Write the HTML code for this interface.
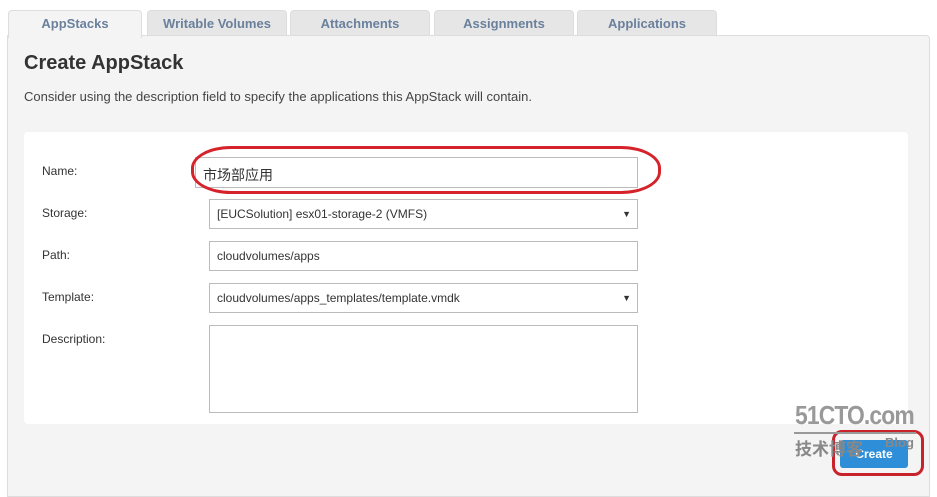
<!DOCTYPE html>
<html><head><meta charset="utf-8"><style>
body{margin:0;width:937px;height:475px;background:#fff;font-family:"Liberation Sans","Noto Sans CJK SC",sans-serif;position:relative;overflow:hidden}
.tab{position:absolute;top:10px;height:26px;background:#e6e6e6;border:1px solid #ddd;border-bottom:none;border-radius:4px 4px 0 0;color:#6a809c;font-weight:bold;font-size:13px;text-align:center;line-height:25px}
.tab.act{background:#f4f4f4;height:27px;z-index:2}
.panel{position:absolute;left:7px;top:35px;width:921px;height:460px;background:#f4f4f4;border:1px solid #ddd;border-radius:0 4px 0 0}
.box{position:absolute;left:24px;top:132px;width:884px;height:292px;background:#fff;border-radius:4px}
.lbl{position:absolute;left:42px;font-size:12px;color:#333}
.in{position:absolute;left:209px;width:427px;height:28px;border:1px solid #bbb;background:#fff;font-size:12px;color:#333;line-height:28px;box-sizing:content-box}
.in span{padding-left:7px}
.arr{position:absolute;right:6px;top:0;font-size:9px}
</style></head><body>
<div class="tab act" style="left:8px;width:132px">AppStacks</div>
<div class="tab" style="left:147px;width:138px">Writable Volumes</div>
<div class="tab" style="left:290px;width:138px">Attachments</div>
<div class="tab" style="left:434px;width:138px">Assignments</div>
<div class="tab" style="left:577px;width:138px">Applications</div>
<div class="panel"></div>
<div style="position:absolute;left:24px;top:52px;font-size:20px;font-weight:bold;color:#333">Create AppStack</div>
<div style="position:absolute;left:24px;top:89px;font-size:13px;color:#444">Consider using the description field to specify the applications this AppStack will contain.</div>
<div class="box"></div>
<div class="lbl" style="top:164px">Name:</div>
<div class="lbl" style="top:206px">Storage:</div>
<div class="lbl" style="top:248px">Path:</div>
<div class="lbl" style="top:290px">Template:</div>
<div class="lbl" style="top:332px">Description:</div>
<div class="in" style="left:195px;width:441px;top:157px;font-size:14px;line-height:34px;height:29px"><span>市场部应用</span></div>
<div style="position:absolute;left:191px;top:146px;width:464px;height:42px;border:3px solid #d6232b;border-radius:40px/22px"></div>
<div class="in" style="top:199px"><span>[EUCSolution] esx01-storage-2 (VMFS)</span><span class="arr">▼</span></div>
<div class="in" style="top:241px"><span>cloudvolumes/apps</span></div>
<div class="in" style="top:283px"><span>cloudvolumes/apps_templates/template.vmdk</span><span class="arr">▼</span></div>
<div class="in" style="top:325px;height:86px"></div>
<div style="position:absolute;left:840px;top:440px;width:68px;height:28px;background:#2e8fd8;border-radius:3px;color:#fff;font-weight:bold;font-size:12px;text-align:center;line-height:28px">Create</div>
<div style="position:absolute;left:832px;top:430px;width:86px;height:40px;border:3px solid #c8232b;border-radius:10px"></div>
<div style="position:absolute;left:795px;top:400px;font-size:26px;font-weight:bold;color:#999;letter-spacing:-1px;transform:scaleX(0.88);transform-origin:0 0">51CTO.com</div>
<div style="position:absolute;left:794px;top:432px;width:122px;height:2px;background:#999"></div>
<div style="position:absolute;left:795px;top:435px;font-size:17px;color:#888;font-weight:bold">技术博客</div>
<div style="position:absolute;left:885px;top:435px;font-size:13px;color:#888;font-weight:bold">Blog</div>
</body></html>
